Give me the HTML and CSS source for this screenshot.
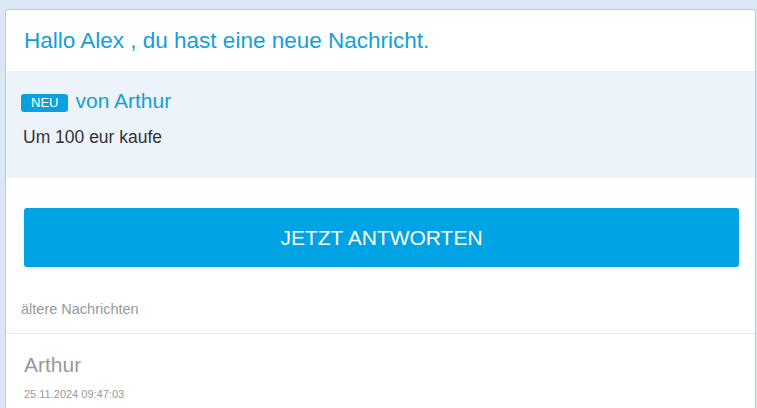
FILE: index.html
```html
<!DOCTYPE html>
<html lang="de">
<head>
    <meta charset="UTF-8">
    <meta name="viewport" content="width=device-width, initial-scale=1.0">
    <title>Neue Nachricht</title>
    <link rel="stylesheet" href="styles.css">
</head>
<body>
    <div class="card">
        <div class="header">Hallo Alex , du hast eine neue Nachricht.</div>
        <div class="message">
            <div class="from"><span class="badge">NEU</span> von Arthur</div>
            <div class="text">Um 100 eur kaufe</div>
        </div>
        <div class="actions">
            <button class="reply">JETZT ANTWORTEN</button>
        </div>
        <div class="older-title">ältere Nachrichten</div>
        <div class="older-item">
            <div class="older-name">Arthur</div>
            <div class="older-date">25.11.2024 09:47:03</div>
        </div>
    </div>
</body>
</html>
```

FILE: styles.css
```css
body {
    margin: 0;
    background: #dce7f5;
    font-family: "Liberation Sans", Arial, sans-serif;
    height: 408px;
    overflow: hidden;
}
.card {
    margin: 9px 1px 0 5px;
    background: #fff;
    border: 1px solid #bccbdb;
    border-bottom: none;
    border-radius: 3px 3px 0 0;
    height: 398px;
    overflow: hidden;
}
.header {
    height: 61px;
    padding-left: 18px;
    line-height: 62px;
    font-size: 22.5px;
    color: #129fd9;
    border-bottom: 1px solid #eef1f5;
}
.message {
    background: #edf3fa;
    height: 106px;
    padding: 18px 0 0 15px;
    box-sizing: border-box;
}
.from {
    font-size: 21px;
    color: #129fd9;
    display: flex;
    align-items: center;
    height: 22px;
}
.badge {
    display: inline-block;
    background: #0aa1e0;
    color: #fff;
    font-size: 13px;
    line-height: 18px;
    padding: 0 10px;
    border-radius: 3px;
    margin-right: 7px;
    margin-top: 3px;
}
.text {
    margin-top: 15px;
    padding-left: 2px;
    font-size: 17.5px;
    color: #333;
}
.actions {
    padding: 30px 16px 0 18px;
}
.reply {
    width: 100%;
    height: 59px;
    border: none;
    border-radius: 3px;
    background: #00a3e4;
    color: #fff;
    font-family: "Liberation Sans", Arial, sans-serif;
    font-size: 21px;
    cursor: pointer;
}
.older-title {
    padding: 34px 0 0 15px;
    height: 32px;
    font-size: 14.5px;
    color: #999;
    border-bottom: 1px solid #e6e6e6;
}
.older-item {
    padding: 19px 0 0 18px;
}
.older-name {
    font-size: 21px;
    color: #999;
}
.older-date {
    margin-top: 11px;
    font-size: 11px;
    color: #999;
}
```
